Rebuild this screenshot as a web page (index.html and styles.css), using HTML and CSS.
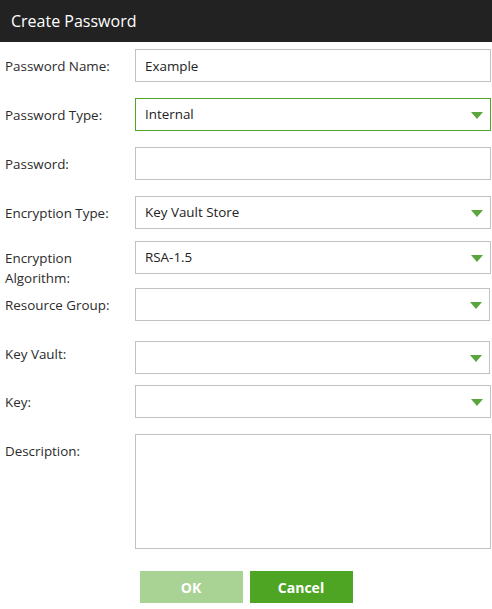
FILE: index.html
```html
<!DOCTYPE html>
<html lang="en">
<head>
<meta charset="utf-8" />
<meta name="viewport" content="width=device-width,initial-scale=1" />
<title>Create Password</title>
<link rel="stylesheet" href="styles.css">
</head>
<body>

<!-- ===== Dialog title ===== -->
<header class="dlgTitle">Create Password</header>

<!-- ===== Form body ===== -->
<form class="pwForm" onsubmit="return false">
  <div class="field">
    <label class="lbl" for="pwName">Password Name:</label>
    <input class="box" id="pwName" type="text" value="Example">
  </div>

  <div class="field">
    <span class="lbl">Password Type:</span>
    <div class="box select active">Internal
      <svg class="caret" viewBox="0 0 12 7" aria-hidden="true"><path d="M0 0h12L6 7z"/></svg>
    </div>
  </div>

  <div class="field">
    <label class="lbl" for="pw">Password:</label>
    <input class="box" id="pw" type="password">
  </div>

  <div class="field">
    <span class="lbl">Encryption Type:</span>
    <div class="box select">Key Vault Store
      <svg class="caret" viewBox="0 0 12 7" aria-hidden="true"><path d="M0 0h12L6 7z"/></svg>
    </div>
  </div>

  <div class="field tight">
    <span class="lbl">Encryption Algorithm:</span>
    <div class="box select">RSA-1.5
      <svg class="caret" viewBox="0 0 12 7" aria-hidden="true"><path d="M0 0h12L6 7z"/></svg>
    </div>
  </div>

  <div class="field flush">
    <span class="lbl">Resource Group:</span>
    <div class="box select narrow">
      <svg class="caret" viewBox="0 0 12 7" aria-hidden="true"><path d="M0 0h12L6 7z"/></svg>
    </div>
  </div>

  <div class="field loose">
    <span class="lbl up">Key Vault:</span>
    <div class="box select narrow">
      <svg class="caret" viewBox="0 0 12 7" aria-hidden="true"><path d="M0 0h12L6 7z"/></svg>
    </div>
  </div>

  <div class="field tighter">
    <span class="lbl">Key:</span>
    <div class="box select">
      <svg class="caret" viewBox="0 0 12 7" aria-hidden="true"><path d="M0 0h12L6 7z"/></svg>
    </div>
  </div>

  <div class="field">
    <label class="lbl" for="desc">Description:</label>
    <textarea class="box area" id="desc"></textarea>
  </div>

  <div class="actions">
    <button class="btn btnOk" type="submit" disabled>OK</button>
    <button class="btn btnCancel" type="button">Cancel</button>
  </div>
</form>

</body>
</html>
```

FILE: styles.css
```css
/* ===== Vars & base ===== */
:root{
  --ink:#2b2b2b;
  --line:#c2c2c2;
  --green:#4ea524;
  --greenSoft:#a9d394;
  --caret:#5aa63c;
}
*{box-sizing:border-box}
html,body{margin:0;background:#fff;color:var(--ink);font:400 13.4px/20px "Open Sans", "Liberation Sans", sans-serif}

/* ===== Title bar ===== */
.dlgTitle{
  height:42px;
  padding:0 11px;
  background:#222;
  color:#fff;
  font-size:16px;
  line-height:42px;
}

/* ===== Form rows ===== */
.pwForm{padding:7px 1px 0 5px}
.field{display:flex; align-items:flex-start}
.field + .field{margin-top:16px}
.field.tight{margin-top:12px}
.field.tighter{margin-top:11px}
.field.flush{margin-top:0}
.field.loose{margin-top:20px}

.lbl{flex:0 0 130px; padding:7px 8px 0 0; color:var(--ink)}
.lbl.up{padding-top:3px}

/* inputs and fake selects share one box */
.box{
  position:relative;
  flex:0 0 356px;
  height:33px;
  margin:0;
  padding:0 9px;
  border:1px solid var(--line);
  background:#fff;
  color:#222;
  font:inherit;
  line-height:31px;
  outline:none;
}
.box.narrow{flex-basis:355px}
.box.active{border-color:var(--green)}
.area{height:115px; resize:none; padding:6px 9px; line-height:20px}

.caret{
  position:absolute; right:7px; top:13px;
  width:12px; height:7px; fill:var(--caret);
}

/* ===== Buttons ===== */
.actions{display:flex; justify-content:center; gap:7px; margin-top:22px; padding-right:4px}
.btn{
  width:103px; height:32px;
  border:0; color:#fff;
  font:700 14px/32px "Open Sans", "Liberation Sans", sans-serif;
  cursor:pointer;
}
.btnOk{background:var(--greenSoft)}
.btnCancel{background:var(--green)}
```
